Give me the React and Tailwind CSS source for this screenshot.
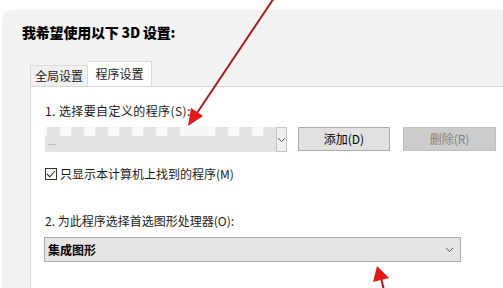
import React from 'react';

const font = { fontFamily: '"Microsoft YaHei", "Noto Sans CJK SC", "Noto Sans", sans-serif' };

function Chevron({ className = '' }) {
  return (
    <svg width="9" height="6" viewBox="0 0 9 6" className={className}>
      <path d="M1 1 L4.5 4.5 L8 1" fill="none" stroke="#555" strokeWidth="1" />
    </svg>
  );
}

function ObscuredCombo() {
  const slots = [0, 1, 2, 3, 4, 5, 6, 7, 8, 9];
  return (
    <div className="w-[241px] h-[25px] flex">
      <div className="flex-1 flex flex-col bg-[#f8f8f8]">
        <div className="h-[9px] flex gap-[11px] pl-[2px]">
          {slots.map((i) => (
            <div key={i} className={i === 6 ? 'w-[13px]' : 'w-[13px] bg-[#e3e3e3]'} />
          ))}
        </div>
        <div className="flex-1 bg-[#e3e3e3] flex items-center">
          <div className="ml-[3px] w-[8px] h-px bg-[#bdbdbd]" />
        </div>
      </div>
      <div className="w-[14px] bg-[#f0f0f0] border border-[#c4c4c4] flex items-center justify-center">
        <Chevron />
      </div>
    </div>
  );
}

function Arrows() {
  return (
    <svg className="absolute inset-0 pointer-events-none" width="503" height="288" viewBox="0 0 503 288">
      <line x1="274" y1="-2" x2="197" y2="113" stroke="#a81c1c" strokeWidth="2" />
      <polygon points="188,126 203,116 191,108" fill="#e01818" />
      <line x1="381" y1="278" x2="384" y2="290" stroke="#a81c1c" strokeWidth="2" />
      <polygon points="377,266 389,278 373,282" fill="#e01818" />
    </svg>
  );
}

export default function App() {
  return (
    <div className="relative w-[503px] h-[288px] overflow-hidden bg-white text-[#1a1a1a]" style={font}>
      <div className="mt-[10px] ml-[2px] h-[278px] rounded-tl-[10px] bg-[#f3f3f3] flex flex-col">
        <div className="pt-[12px] pl-[20px] text-[14px] leading-[20px] font-black text-black tracking-[-0.2px]">
          我希望使用以下 3D 设置:
        </div>

        <div className="mt-[19px] ml-[28px] flex items-end h-[25px] text-[12px] leading-[16px]">
          <div className="w-[58px] h-[21px] border border-b-0 border-[#d9d9d9] bg-[#f0f0f0] flex items-center justify-center">
            全局设置
          </div>
          <div className="w-[64px] h-[25px] border border-b-0 border-l-0 border-[#d9d9d9] bg-white flex items-center justify-center">
            程序设置
          </div>
        </div>

        <div className="ml-[28px] flex-1 bg-white border-l border-t border-[#d9d9d9] pl-[14px] pt-[16px] text-[12px] leading-[16px]">
          <div className="tracking-[0.4px]">1. 选择要自定义的程序(S):</div>

          <div className="mt-[8px] flex items-start">
            <ObscuredCombo />
            <button className="ml-[12px] w-[92px] h-[24px] bg-[#e1e1e1] border border-[#adadad] text-[12px] text-black">
              添加(D)
            </button>
            <button className="ml-[13px] w-[93px] h-[24px] bg-[#cccccc] border border-[#bfbfbf] text-[12px] text-[#838383]">
              删除(R)
            </button>
          </div>

          <div className="mt-[14px] flex items-center h-[16px]">
            <div className="w-[12px] h-[12px] border border-[#333] bg-white flex items-center justify-center">
              <svg width="10" height="8" viewBox="0 0 10 8">
                <path d="M1 4 L3.8 6.8 L9 1" fill="none" stroke="#222" strokeWidth="1.1" />
              </svg>
            </div>
            <span className="ml-[3px]">只显示本计算机上找到的程序(M)</span>
          </div>

          <div className="mt-[31px]">2. 为此程序选择首选图形处理器(O):</div>

          <div className="mt-[8px] -ml-px w-[417px] h-[25px] bg-[#e5e5e5] border border-[#adadad] flex items-center justify-between pl-[3px] pr-[6px]">
            <span className="font-bold text-black">集成图形</span>
            <Chevron />
          </div>
        </div>
      </div>
      <Arrows />
    </div>
  );
}
